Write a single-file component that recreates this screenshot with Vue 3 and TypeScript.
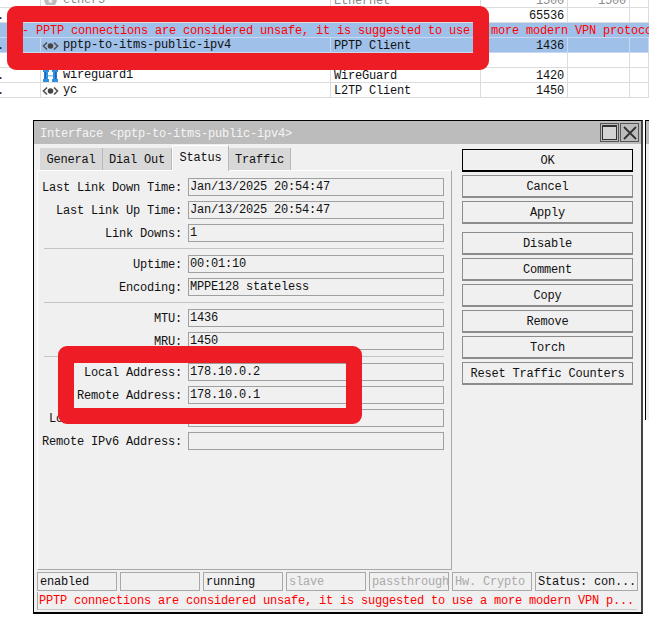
<script setup lang="ts">
const columns = [41, 290, 150, 87, 62, 19]

interface TableRow {
  flag?: string
  icon?: 'tunnel' | 'wg' | 'gear'
  name?: string
  type?: string
  mtu?: string
  l2?: string
  kind?: string
  note?: string
}

const rows: TableRow[] = [
  { kind: 'clip', icon: 'gear', name: 'ether5', type: 'Ethernet', mtu: '1500', l2: '1500' },
  { flag: '.', mtu: '65536' },
  { kind: 'banner', note: '- PPTP connections are considered unsafe, it is suggested to use a more modern VPN protocol instead' },
  { kind: 'selected', flag: '.', icon: 'tunnel', name: 'pptp-to-itms-public-ipv4', type: 'PPTP Client', mtu: '1436' },
  { flag: '' },
  { flag: '.', icon: 'wg', name: 'wireguard1', type: 'WireGuard', mtu: '1420' },
  { flag: '.', icon: 'tunnel', name: 'yc', type: 'L2TP Client', mtu: '1450' },
]

const tabs = [
  { label: 'General', active: false, width: 63 },
  { label: 'Dial Out', active: false, width: 69 },
  { label: 'Status', active: true, width: 57 },
  { label: 'Traffic', active: false, width: 62 },
]

const groups = [
  [
    { label: 'Last Link Down Time:', value: 'Jan/13/2025 20:54:47' },
    { label: 'Last Link Up Time:', value: 'Jan/13/2025 20:54:47' },
    { label: 'Link Downs:', value: '1' },
  ],
  [
    { label: 'Uptime:', value: '00:01:10' },
    { label: 'Encoding:', value: 'MPPE128 stateless' },
  ],
  [
    { label: 'MTU:', value: '1436' },
    { label: 'MRU:', value: '1450' },
  ],
  [
    { label: 'Local Address:', value: '178.10.0.2' },
    { label: 'Remote Address:', value: '178.10.0.1' },
    { label: 'Local IPv6 Address:', value: '' },
    { label: 'Remote IPv6 Address:', value: '' },
  ],
]

const buttonGroups = [
  ['OK', 'Cancel', 'Apply'],
  ['Disable', 'Comment', 'Copy', 'Remove', 'Torch', 'Reset Traffic Counters'],
]

const statusCells = [
  { text: 'enabled', dim: false, width: 80 },
  { text: '', dim: false, width: 80 },
  { text: 'running', dim: false, width: 80 },
  { text: 'slave', dim: true, width: 80 },
  { text: 'passthrough', dim: true, width: 80 },
  { text: 'Hw. Crypto', dim: true, width: 80 },
  { text: 'Status: con...', dim: false, width: 103 },
]
</script>

<template>
  <div class="page">
    <section class="table">
      <div v-for="(row, r) in rows" :key="r" class="row" :class="row.kind">
        <template v-if="row.kind === 'banner'">
          <span class="note">{{ row.note }}</span>
        </template>
        <template v-else>
          <span class="cell flag" :style="{ width: columns[0] + 'px' }">{{ row.flag }}</span>
          <span class="cell name" :style="{ width: columns[1] + 'px' }">
            <svg v-if="row.icon === 'tunnel'" class="ico" viewBox="0 0 17 12" width="17" height="12">
              <path d="M5 2.500 1.500 6 5 9.500M12 2.500 15.500 6 12 9.500" fill="none" stroke="#555" stroke-width="1.700" />
              <circle cx="8.500" cy="6" r="2.800" fill="#444" />
            </svg>
            <svg v-else-if="row.icon === 'wg'" class="ico" viewBox="0 0 17 13" width="17" height="13">
              <path d="M1 0h6v3H6v7h1v3H1v-3h1V3H1zM10 0h6v3h-1v7h1v3h-6v-3h1V3h-1z" fill="#2f8fe0" />
              <path d="M6 6h5v1.500H6z" fill="#8cc8f4" />
              <path d="M2.500 3h1.500v7H2.500zM13 3h1.500v7H13z" fill="#1866b4" />
            </svg>
            <svg v-else-if="row.icon === 'gear'" class="ico" viewBox="0 0 17 12" width="17" height="12">
              <path d="M4 3h9l2 3-2 4H4L2 6z" fill="#bbb" />
              <circle cx="8.500" cy="6" r="2" fill="#eee" />
            </svg>
            <span>{{ row.name }}</span>
          </span>
          <span class="cell" :style="{ width: columns[2] + 'px' }">{{ row.type }}</span>
          <span class="cell num" :style="{ width: columns[3] + 'px' }">{{ row.mtu }}</span>
          <span class="cell num" :style="{ width: columns[4] + 'px' }">{{ row.l2 }}</span>
          <span class="cell" :style="{ width: columns[5] + 'px' }"></span>
        </template>
      </div>
    </section>

    <section class="window-wrap">
      <div class="window">
        <header class="title">
          <span class="title-text">Interface &lt;pptp-to-itms-public-ipv4&gt;</span>
          <span class="win-btn"><i class="maximize"></i></span>
          <span class="win-btn">
            <svg viewBox="0 0 14 14" width="14" height="14">
              <path d="M1 1l12 12M13 1 1 13" stroke="#333" stroke-width="1.800" />
            </svg>
          </span>
        </header>

        <div class="body">
          <div class="left">
            <nav class="tabs">
              <span
                v-for="tab in tabs"
                :key="tab.label"
                class="tab"
                :class="{ active: tab.active }"
                :style="{ width: tab.width + 'px' }"
              >{{ tab.label }}</span>
            </nav>
            <div class="panel">
              <div v-for="(group, g) in groups" :key="g" class="group">
                <div v-for="field in group" :key="field.label" class="field">
                  <span class="label">{{ field.label }}</span>
                  <span class="value">{{ field.value }}</span>
                </div>
              </div>
            </div>
          </div>

          <aside class="buttons">
            <div v-for="(group, g) in buttonGroups" :key="g" class="button-group">
              <button v-for="b in group" :key="b" class="btn" :class="{ primary: b === 'OK' }" type="button">{{ b }}</button>
            </div>
          </aside>
        </div>

        <footer class="status">
          <div class="status-cells">
            <span
              v-for="(cell, c) in statusCells"
              :key="c"
              class="status-cell"
              :class="{ dim: cell.dim }"
              :style="{ width: cell.width + 'px' }"
            >{{ cell.text }}</span>
          </div>
          <div class="status-msg">PPTP connections are considered unsafe, it is suggested to use a more modern VPN p...</div>
        </footer>
      </div>
    </section>

    <div class="behind"></div>
    <div class="mark mark-top"></div>
    <div class="mark mark-bottom"></div>
  </div>
</template>

<style>
html,
body {
  margin: 0;
  background: #fff;
}
</style>

<style scoped>
.page {
  position: relative;
  width: 649px;
  height: 630px;
  overflow: hidden;
  background: #fff;
  font-family: "Liberation Mono", "DejaVu Sans Mono", monospace;
  font-size: 12px;
  letter-spacing: -0.2px;
  color: #111;
}
.table {
  height: 97px;
  margin-top: -7px;
  display: flex;
  flex-direction: column;
}
.row {
  display: flex;
  flex: none;
  border-bottom: 1px solid #dcdcdc;
  height: 14px;
  line-height: 17px;
  white-space: nowrap;
  overflow: hidden;
}
.row.clip {
  color: #888;
}
.row.selected,
.row.banner {
  background: #9fc0e9;
  border-bottom-color: #c8d8ee;
}
.note {
  padding-left: 22px;
  color: #f00;
}
.cell {
  flex: none;
  box-sizing: border-box;
  padding: 0 3px;
  border-right: 1px solid #dcdcdc;
  overflow: hidden;
}
.flag {
  padding: 0;
  text-indent: -3px;
}
.row.selected .cell {
  border-right-color: #c8d8ee;
}
.num {
  text-align: right;
}
.name {
  display: flex;
  align-items: center;
  gap: 4px;
  padding-left: 1px;
}
.ico {
  flex: none;
  margin-top: 1px;
}
.window-wrap {
  display: flex;
  margin: 30px 0 0 33px;
}
.window {
  width: 610px;
  height: 494px;
  box-sizing: border-box;
  flex: none;
  display: flex;
  flex-direction: column;
  border: 1px solid #000;
  border-bottom-width: 2px;
  border-right: 2px solid #444;
  background: #f0f0f0;
}
.behind {
  position: absolute;
  left: 645px;
  top: 120px;
  width: 4px;
  height: 300px;
  box-sizing: border-box;
  border-left: 1px solid #000;
  border-top: 1px solid #000;
  background: linear-gradient(#bcbcbc 23px, #f0f0f0 23px);
}
.title {
  display: flex;
  align-items: center;
  height: 23px;
  flex: none;
  box-sizing: border-box;
  padding: 0 2px 0 6px;
  background: #bcbcbc;
  color: #f4f4f4;
  gap: 1px;
}
.title-text {
  flex: 1;
  padding-top: 2px;
}
.win-btn {
  width: 19px;
  height: 19px;
  box-sizing: border-box;
  border: 1px solid #555;
  display: flex;
  align-items: center;
  justify-content: center;
}
.maximize {
  display: block;
  width: 15px;
  height: 15px;
  box-sizing: border-box;
  border: 1px solid #333;
  border-top-width: 2px;
  background: #d4d4d4;
}
.body {
  flex: 1;
  display: flex;
  padding: 5px 0 0 3px;
  min-height: 0;
}
.left {
  width: 415px;
  display: flex;
  flex-direction: column;
}
.tabs {
  display: flex;
  height: 21px;
  align-items: flex-end;
  padding-left: 3px;
  flex: none;
}
.tab {
  box-sizing: border-box;
  height: 22px;
  line-height: 24px;
  text-align: center;
  background: #d8d8d8;
  border-right: 1px solid #b8b8b8;
}
.tab.active {
  height: 26px;
  line-height: 25px;
  margin-bottom: -1px;
  background: #f0f0f0;
  border-top: 1px solid #fff;
  border-left: 1px solid #fff;
  position: relative;
}
.panel {
  flex: 1;
  box-sizing: border-box;
  border-top: 1px solid #fff;
  border-left: 1px solid #fff;
  border-right: 1px solid #a8a8a8;
  border-bottom: 1px solid #a8a8a8;
  padding: 7px 7px 0 6px;
  display: flex;
  flex-direction: column;
}
.group {
  display: flex;
  flex-direction: column;
  gap: 5px;
  padding-bottom: 6px;
  margin-bottom: 6px;
  border-bottom: 1px solid #c4c4c4;
}
.group:last-child {
  border-bottom: none;
}
.field {
  display: flex;
  height: 18px;
  align-items: center;
  justify-content: flex-end;
  gap: 6px;
}
.label {
  flex: none;
  white-space: nowrap;
  padding-top: 1px;
}
.value {
  flex: none;
  width: 256px;
  height: 18px;
  line-height: 17px;
  box-sizing: border-box;
  padding-left: 1px;
  border: 1px solid #a0a0a0;
  background: #f0f0f0;
}
.buttons {
  width: 171px;
  margin-left: 10px;
  display: flex;
  flex-direction: column;
  gap: 8px;
}
.button-group {
  display: flex;
  flex-direction: column;
  gap: 3px;
}
.btn {
  height: 23px;
  padding: 2px 0 0;
  font: inherit;
  letter-spacing: inherit;
  color: inherit;
  background: #f0f0f0;
  border: 1px solid #8c8c8c;
  border-bottom-width: 2px;
}
.btn.primary {
  border: 1px solid #000;
  border-bottom-width: 2px;
}
.status {
  flex: none;
  padding: 2px 3px;
  display: flex;
  flex-direction: column;
  gap: 1px;
}
.status-cells {
  display: flex;
  gap: 3px;
}
.status-cell {
  box-sizing: border-box;
  height: 19px;
  line-height: 19px;
  padding-left: 2px;
  border: 1px solid #a8a8a8;
  white-space: nowrap;
  overflow: hidden;
}
.status-cell.dim {
  color: #aaa;
}
.status-msg {
  height: 18px;
  width: 600px;
  box-sizing: border-box;
  line-height: 18px;
  color: #f00;
  padding-left: 1px;
  border-left: 1px solid #a8a8a8;
  border-bottom: 1px solid #c8c8c8;
  white-space: nowrap;
  overflow: hidden;
}
.mark {
  position: absolute;
  box-sizing: border-box;
  border: 16px solid #ee1c25;
  border-radius: 9px;
}
.mark-top {
  left: 7px;
  top: 6px;
  width: 482px;
  height: 64px;
  border-bottom-width: 17px;
}
.mark-bottom {
  left: 58px;
  top: 346px;
  width: 304px;
  height: 78px;
  border-top-width: 17px;
}
</style>
